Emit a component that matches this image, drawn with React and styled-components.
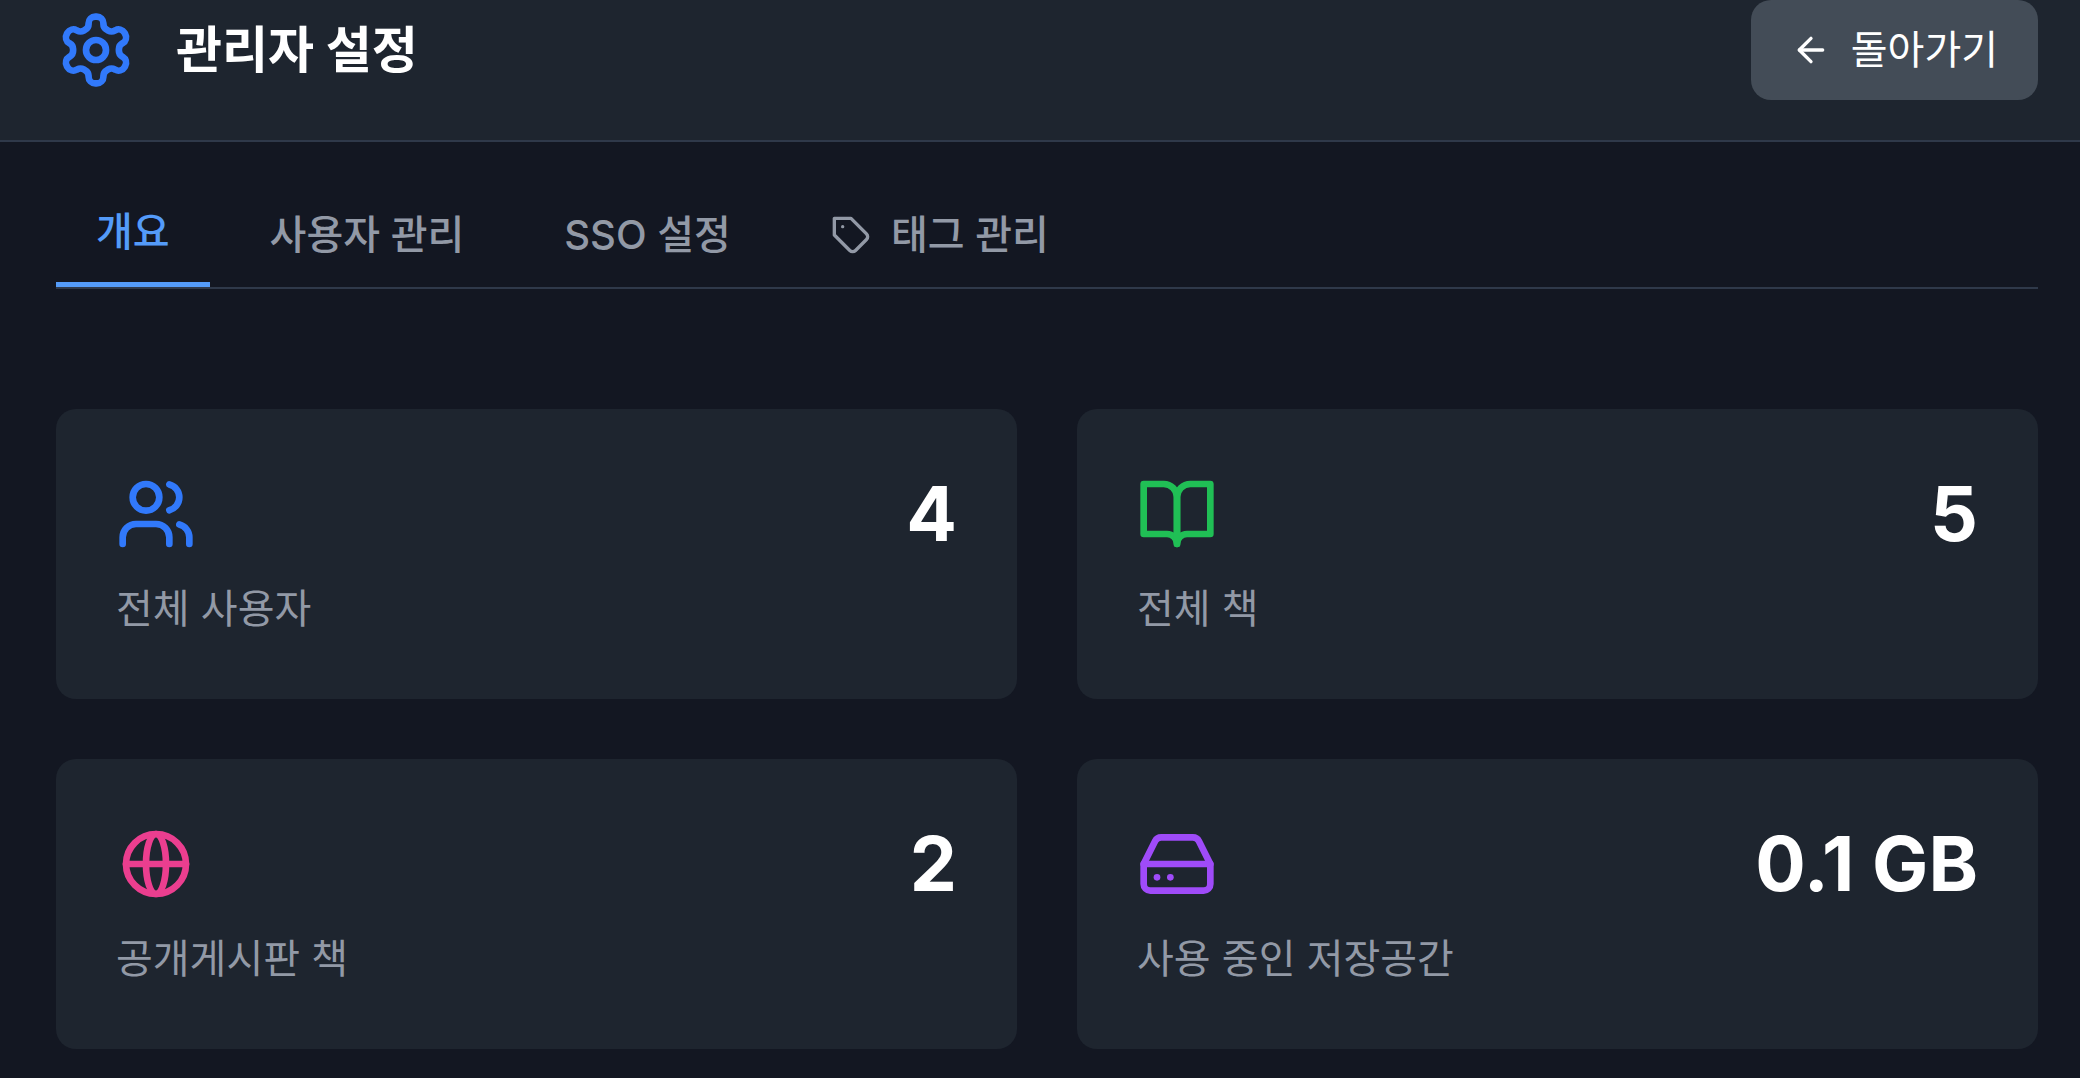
import { useState } from 'react';
import styled, { createGlobalStyle } from 'styled-components';
import { ArrowLeft, HardDrive, Users } from 'lucide-react';

const GlobalStyle = createGlobalStyle`
  * {
    box-sizing: border-box;
  }

  body {
    margin: 0;
    background-color: #131722;
    color: #fff;
    font-family: Inter, 'Noto Sans CJK KR', sans-serif;
    font-size: 40px;
    line-height: 60px;
  }

  svg {
    display: block;
    flex-shrink: 0;
  }
`;

const Header = styled.header`
  display: flex;
  align-items: center;
  justify-content: space-between;
  background-color: #1e252f;
  border-bottom: 2px solid #2f394a;
  padding: 0 42px 40px 56px;
`;

const Brand = styled.div`
  display: flex;
  align-items: center;
  gap: 40px;

  svg {
    color: #3179fb;
  }
`;

const Title = styled.h1`
  font-size: 50px;
  font-weight: 700;
  line-height: 70px;
  margin: 0;
`;

const BackButton = styled.button`
  display: flex;
  align-items: center;
  gap: 20px;
  background-color: #434c57;
  border: 0;
  border-radius: 20px;
  color: #fff;
  cursor: pointer;
  font: inherit;
  padding: 20px 40px;
`;

const Main = styled.main`
  padding: 40px 42px 28px 56px;
`;

const Tabs = styled.nav`
  display: flex;
  gap: 20px;
  border-bottom: 2px solid #2f394a;
  margin-bottom: 120px;
`;

const Tab = styled.button`
  display: flex;
  align-items: center;
  gap: 20px;
  background: none;
  border: 0;
  border-bottom: ${({ $active }) => ($active ? '5px solid #549bf9' : '0')};
  color: ${({ $active }) => ($active ? '#549bf9' : '#9299a6')};
  cursor: pointer;
  font: inherit;
  font-weight: 500;
  padding: 20px 40px;
`;

const Stats = styled.section`
  display: grid;
  grid-template-columns: 1fr 1fr;
  gap: 60px;
`;

const Card = styled.article`
  background-color: #1e252f;
  border-radius: 20px;
  padding: 60px;
`;

const CardTop = styled.div`
  display: flex;
  align-items: center;
  justify-content: space-between;
  margin-bottom: 20px;

  svg {
    color: ${({ $color }) => $color};
  }
`;

const Value = styled.span`
  font-size: 75px;
  font-weight: 700;
  line-height: 90px;
`;

const Label = styled.p`
  color: #9299a6;
  margin: 0;
`;

const Icon = ({ size, children }) => (
  <svg
    width={size}
    height={size}
    viewBox='0 0 24 24'
    fill='none'
    stroke='currentColor'
    strokeWidth='2'
    strokeLinecap='round'
    strokeLinejoin='round'
    aria-hidden='true'
  >
    {children}
  </svg>
);

const Gear = ({ size }) => (
  <Icon size={size}>
    <path d='M12.22 2h-.44a2 2 0 0 0-2 2v.18a2 2 0 0 1-1 1.73l-.43.25a2 2 0 0 1-2 0l-.15-.08a2 2 0 0 0-2.73.73l-.22.38a2 2 0 0 0 .73 2.73l.15.1a2 2 0 0 1 1 1.72v.51a2 2 0 0 1-1 1.74l-.15.09a2 2 0 0 0-.73 2.73l.22.38a2 2 0 0 0 2.73.73l.15-.08a2 2 0 0 1 2 0l.43.25a2 2 0 0 1 1 1.73V20a2 2 0 0 0 2 2h.44a2 2 0 0 0 2-2v-.18a2 2 0 0 1 1-1.73l.43-.25a2 2 0 0 1 2 0l.15.08a2 2 0 0 0 2.73-.73l.22-.39a2 2 0 0 0-.73-2.73l-.15-.08a2 2 0 0 1-1-1.74v-.5a2 2 0 0 1 1-1.74l.15-.09a2 2 0 0 0 .73-2.73l-.22-.38a2 2 0 0 0-2.73-.73l-.15.08a2 2 0 0 1-2 0l-.43-.25a2 2 0 0 1-1-1.73V4a2 2 0 0 0-2-2z' />
    <circle cx='12' cy='12' r='3' />
  </Icon>
);

const Tag = ({ size }) => (
  <Icon size={size}>
    <path d='M12 2H2v10l9.29 9.29c.94.94 2.48.94 3.42 0l6.58-6.58c.94-.94.94-2.48 0-3.42L12 2Z' />
    <path d='M7 7h.01' />
  </Icon>
);

const Book = ({ size }) => (
  <Icon size={size}>
    <path d='M2 3h6a4 4 0 0 1 4 4v14a3 3 0 0 0-3-3H2z' />
    <path d='M22 3h-6a4 4 0 0 0-4 4v14a3 3 0 0 1 3-3h7z' />
  </Icon>
);

const Globe = ({ size }) => (
  <Icon size={size}>
    <circle cx='12' cy='12' r='9' />
    <path d='M3 12h18M12 21c1.657 0 3-4.03 3-9s-1.343-9-3-9M12 21c-1.657 0-3-4.03-3-9s1.343-9 3-9' />
  </Icon>
);

const tabs = [
  { id: 'overview', label: '개요' },
  { id: 'users', label: '사용자 관리' },
  { id: 'sso', label: 'SSO 설정' },
  { id: 'tags', label: '태그 관리', icon: Tag },
];

const stats = [
  { label: '전체 사용자', value: '4', icon: Users, color: '#3179fb' },
  { label: '전체 책', value: '5', icon: Book, color: '#20bf55' },
  { label: '공개게시판 책', value: '2', icon: Globe, color: '#eb3e8f' },
  { label: '사용 중인 저장공간', value: '0.1 GB', icon: HardDrive, color: '#9f4bf9' },
];

export default () => {
  const [active, setActive] = useState('overview');

  return (
    <>
      <GlobalStyle />
      <Header>
        <Brand>
          <Gear size={80} />
          <Title>관리자 설정</Title>
        </Brand>
        <BackButton type='button'>
          <ArrowLeft size={40} />
          돌아가기
        </BackButton>
      </Header>
      <Main>
        <Tabs>
          {tabs.map(({ id, label, icon: TabIcon }) => (
            <Tab key={id} type='button' $active={id === active} onClick={() => setActive(id)}>
              {TabIcon && <TabIcon size={40} />}
              {label}
            </Tab>
          ))}
        </Tabs>
        <Stats>
          {stats.map(({ label, value, icon: StatIcon, color }) => (
            <Card key={label}>
              <CardTop $color={color}>
                <StatIcon size={80} />
                <Value>{value}</Value>
              </CardTop>
              <Label>{label}</Label>
            </Card>
          ))}
        </Stats>
      </Main>
    </>
  );
};
